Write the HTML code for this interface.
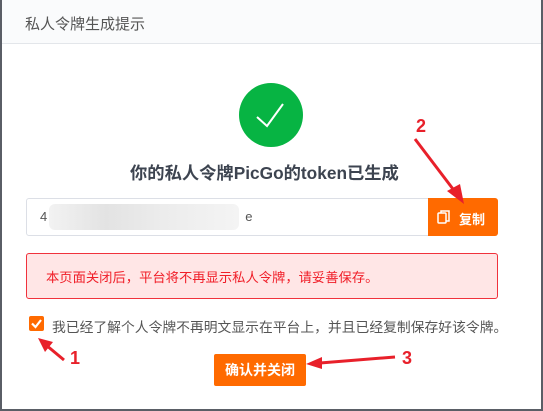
<!DOCTYPE html>
<html><head><meta charset="utf-8"><style>
*{margin:0;padding:0;box-sizing:border-box}
body{width:543px;height:411px;background:#fff;position:relative;overflow:hidden;font-family:"Liberation Sans","Noto Sans CJK SC",sans-serif}
.frame{position:absolute;left:0;top:0;width:543px;height:411px;border-left:2px solid #5a5e66;border-right:2px solid #5a5e66;border-bottom:2px solid #5a5e66}
.hd{position:absolute;left:2px;top:0;width:539px;height:44px;background:#fafbfc;border-bottom:1px solid #e3e6ea}
.hd span{position:absolute;left:23px;top:13px;font-size:15px;color:#555}
.circ{position:absolute;left:239px;top:83px;width:64px;height:64px;border-radius:50%;background:#07b443}
.t{position:absolute;left:130px;top:159px;font-size:17.3px;font-weight:bold;color:#3d4450;white-space:nowrap}
.inp{position:absolute;left:26px;top:198px;width:472px;height:38px;border:1px solid #dcdfe6;border-radius:3px;background:#fff}
.inp .v{position:absolute;left:13px;top:10px;font-size:13px;color:#555;white-space:nowrap}
.blur{position:absolute;left:22px;top:5px;width:190px;height:26px;background:linear-gradient(90deg,#f2f2f2,#e3e3e3 30%,#ececec 60%,#f4f4f4);border-radius:6px}
.btn{position:absolute;left:428px;top:198px;width:70px;height:38px;background:#ff6a00;color:#fff;font-size:13px;font-weight:bold;border-radius:0 3px 3px 0;white-space:nowrap}
.alert{position:absolute;left:26px;top:253px;width:472px;height:46px;border:1px solid #f0323c;background:#ffe6e6;border-radius:3px;color:#f01e28;font-size:13.3px;padding:13px 0 0 19px;white-space:nowrap}
.cb{position:absolute;left:29px;top:316px;width:15px;height:15px;background:#ff6a00;border-radius:2px}
.ct{position:absolute;left:52px;top:316px;font-size:13.8px;color:#555;white-space:nowrap}
.ok{position:absolute;left:214px;top:354px;width:92px;height:32px;background:#ff6a00;color:#fff;font-size:14px;font-weight:bold;text-align:center;line-height:32px;border-radius:2px}
.n{position:absolute;color:#e8202a;font-weight:bold;font-size:18px}
</style></head><body>
<div class="hd"><span>私人令牌生成提示</span></div>
<div class="circ"><svg width="64" height="64"><path d="M18 34 L28 43 L44 21" fill="none" stroke="#fff" stroke-width="2"/></svg></div>
<div class="t">你的私人令牌PicGo的token已生成</div>
<div class="inp"><div class="blur"></div><div class="v">4<span style="margin-left:198px">e</span></div></div>
<div class="btn"><svg style="position:absolute;left:9px;top:12px" width="14" height="14"><rect x="1" y="3" width="8" height="10" fill="none" stroke="#fff" stroke-width="1.5" rx="1"/><path d="M4 3 V1 H12 V11 H9" fill="none" stroke="#fff" stroke-width="1.5"/></svg><span style="position:absolute;left:31px;top:11px">复制</span></div>
<div class="alert">本页面关闭后，平台将不再显示私人令牌，请妥善保存。</div>
<div class="cb"><svg width="15" height="15"><path d="M3 7.5 L6.5 11 L12 4" fill="none" stroke="#fff" stroke-width="2.2"/></svg></div>
<div class="ct">我已经了解个人令牌不再明文显示在平台上，并且已经复制保存好该令牌。</div>
<div class="ok">确认并关闭</div>
<svg style="position:absolute;left:0;top:0" width="543" height="411">
<g fill="#e8202a" stroke="#e8202a">
<line x1="415" y1="139" x2="456" y2="193" stroke-width="3"/><polygon points="464,204 447,191 460,184" stroke="none"/>
<line x1="64" y1="360" x2="46" y2="345" stroke-width="3"/><polygon points="38,338 53,342 45,352" stroke="none"/>
<line x1="395" y1="357" x2="320" y2="363" stroke-width="3"/><polygon points="306,364 322,357 322,369" stroke="none"/>
</g></svg>
<div class="n" style="left:416px;top:116px">2</div>
<div class="n" style="left:70px;top:348px">1</div>
<div class="n" style="left:402px;top:348px">3</div>
<div class="frame"></div>
</body></html>
